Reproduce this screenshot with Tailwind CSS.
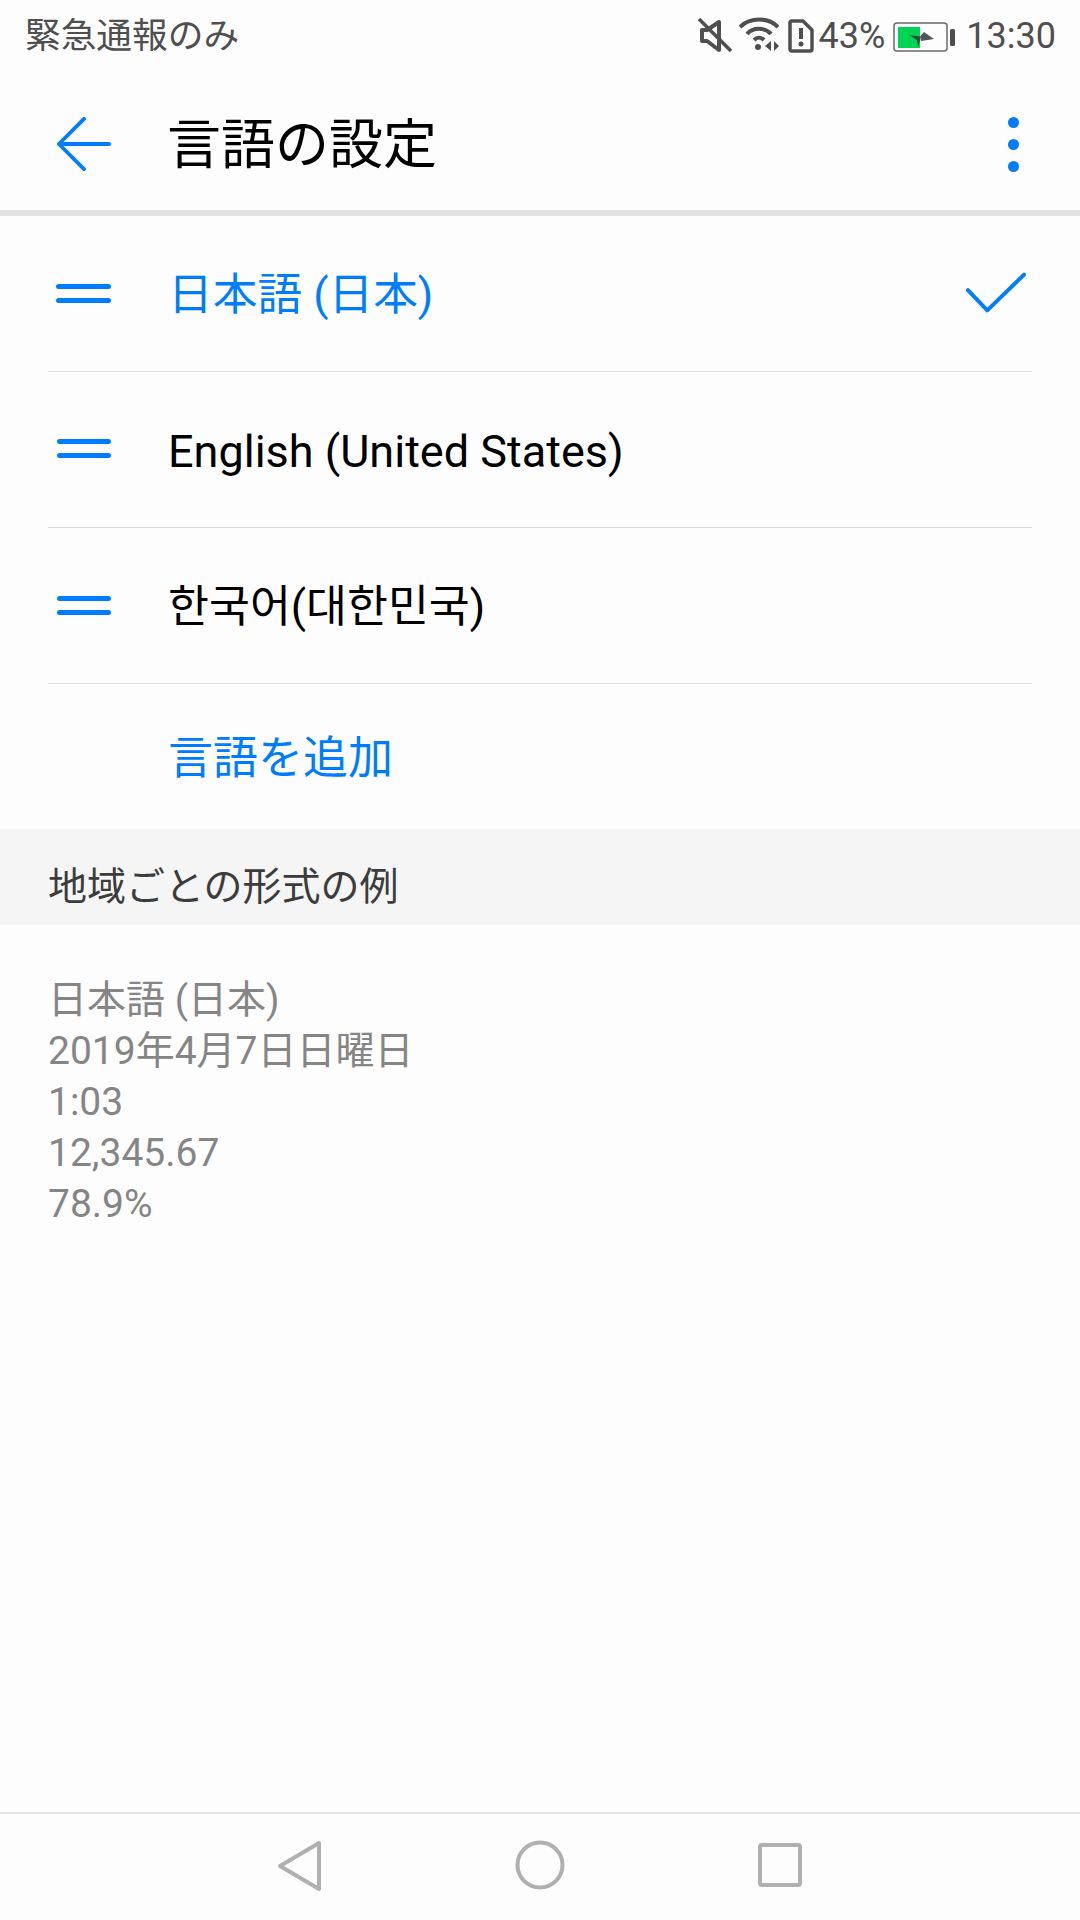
<!DOCTYPE html>
<html lang="ja">
<head>
<meta charset="utf-8">
<script src="https://cdn.jsdelivr.net/npm/@tailwindcss/browser@4"></script>
</head>
<body class="m-0">
<div class="w-[1080px] h-[1920px] bg-[#fdfdfd] flex flex-col overflow-hidden font-['Roboto','Noto_Sans_CJK_JP',sans-serif]">
  <!-- status bar -->
  <div class="h-[72px] flex items-center pl-[25px] pr-[24px] text-[#4f4f4f] shrink-0">
    <span class="text-[35.7px] leading-[72px]">緊急通報のみ</span>
    <div class="ml-auto flex items-center">
      <svg class="w-[36px] h-[40px]" viewBox="0 0 36 40" fill="none" stroke="#4f4f4f" stroke-width="4"><path d="M4 14h5l12-8v28l-12-9H4z" stroke-linejoin="round"/><path d="M1 1 33 33" transform="translate(0 2)" stroke-width="3.5"/></svg>
      <svg class="w-[40px] h-[40px] ml-[5px]" viewBox="0 0 40 40" fill="none" stroke="#4f4f4f" stroke-width="4"><path d="M1 11C11 1 29 1 39 11"/><path d="M8 18C14 11 26 11 32 18"/><path d="M15 24C18 21 22 21 25 24"/><circle cx="19" cy="31" r="3" fill="#4f4f4f" stroke="none"/><path d="M32 25v10l-6-5zM35 25v10l5-5z" fill="#4f4f4f" stroke="none"/></svg>
      <svg class="w-[26px] h-[34px] ml-[9px]" viewBox="0 0 26 34" fill="none"><path d="M4 2h11l9 9v19a2 2 0 0 1-2 2H4a2 2 0 0 1-2-2V4a2 2 0 0 1 2-2z" stroke="#4f4f4f" stroke-width="3.5" stroke-linejoin="round"/><path d="M13 9v11" stroke="#4f4f4f" stroke-width="4"/><circle cx="13" cy="25" r="2.5" fill="#4f4f4f"/></svg>
      <span class="text-[36px] leading-none ml-[5px]">43%</span>
      <svg class="w-[63px] h-[30px] ml-[8px] relative top-[1px]" viewBox="0 0 63 30" fill="none"><rect x="1" y="1" width="53" height="28" rx="3" fill="#fdfdfd" stroke="#6a6a6a" stroke-width="1.5"/><rect x="5" y="5" width="22" height="21" fill="#00d455"/><path d="M27 14.500 31 10 41 17 28 19z" fill="#555"/><path d="M16 13 27 14.500V19L25 25 24 18z" fill="#24543a"/><rect x="57" y="7" width="5" height="17" rx="1.500" fill="#4f4f4f"/></svg>
      <span class="text-[36px] leading-none ml-[10px]">13:30</span>
    </div>
  </div>
  <!-- header -->
  <div class="h-[138px] pt-[6px] flex items-center shrink-0">
    <svg class="w-[54px] h-[54px] ml-[57px]" viewBox="0 0 56 56" fill="none" stroke="#007dff" stroke-width="4" stroke-linecap="round" stroke-linejoin="round"><path d="M28 2 2 28l26 26M2 28h52"/></svg>
    <span class="ml-[56px] text-[54px] leading-none text-black relative top-[2px]">言語の設定</span>
    <div class="ml-auto mr-[61px] flex flex-col gap-[11px]">
      <span class="block w-[11px] h-[11px] rounded-full bg-[#007dff]"></span>
      <span class="block w-[11px] h-[11px] rounded-full bg-[#007dff]"></span>
      <span class="block w-[11px] h-[11px] rounded-full bg-[#007dff]"></span>
    </div>
  </div>
  <div class="h-[6px] bg-[#e1e1e1] shrink-0"></div>
  <!-- languages -->
  <div class="px-[48px] shrink-0">
    <div class="h-[155px] flex items-center">
      <div class="w-[55px] ml-[8px] flex flex-col gap-[9px]"><span class="block h-[5px] bg-[#007dff] rounded-full"></span><span class="block h-[5px] bg-[#007dff] rounded-full"></span></div>
      <span class="ml-[57px] text-[44.700px] leading-none text-[#007dff] relative top-[2px]">日本語 (日本)</span>
      <svg class="ml-auto mr-[6px] w-[60px] h-[44px]" viewBox="0 0 62 44" fill="none" stroke="#007dff" stroke-width="4" stroke-linecap="round" stroke-linejoin="round"><path d="M2 18 22 39 60 2"/></svg>
    </div>
    <div class="h-[1px] bg-[#dcdcdc]"></div>
    <div class="h-[155px] flex items-center">
      <div class="w-[54px] ml-[9px] flex flex-col gap-[9px] relative top-[-1px]"><span class="block h-[5px] bg-[#007dff] rounded-full"></span><span class="block h-[5px] bg-[#007dff] rounded-full"></span></div>
      <span class="ml-[57px] text-[45px] leading-none text-black relative top-[2px]">English (United States)</span>
    </div>
    <div class="h-[1px] bg-[#dcdcdc]"></div>
    <div class="h-[155px] flex items-center">
      <div class="w-[54px] ml-[9px] flex flex-col gap-[9px]"><span class="block h-[5px] bg-[#007dff] rounded-full"></span><span class="block h-[5px] bg-[#007dff] rounded-full"></span></div>
      <span class="ml-[57px] text-[44.500px] leading-none text-black relative top-[2px] font-['Roboto','Noto_Sans_CJK_KR',sans-serif]">한국어(대한민국)</span>
    </div>
    <div class="h-[1px] bg-[#dcdcdc]"></div>
    <div class="h-[145px] flex items-center pl-[120px]">
      <span class="text-[45px] leading-none text-[#007dff] relative top-[2px]">言語を追加</span>
    </div>
  </div>
  <!-- section -->
  <div class="h-[96px] bg-[#f5f5f5] flex items-center pl-[48px] shrink-0">
    <span class="text-[39px] leading-none text-[#3c3c3c] relative top-[10px]">地域ごとの形式の例</span>
  </div>
  <div class="pl-[48px] pt-[50px] text-[39px] leading-[51px] text-[#858585] shrink-0">
    <p>日本語 (日本)</p>
    <p>2019年4月7日日曜日</p>
    <p>1:03</p>
    <p>12,345.67</p>
    <p>78.9%</p>
  </div>
  <!-- nav -->
  <div class="mt-auto h-[108px] border-t-2 border-[#e4e4e4] shrink-0 relative">
    <svg class="absolute left-[277px] top-[26px] w-[46px] h-[52px]" viewBox="0 0 46 52" fill="none" stroke="#b0b0b0" stroke-width="4" stroke-linejoin="round"><path d="M42 3 3 26l39 23z"/></svg>
    <svg class="absolute left-[515px] top-[26px] w-[50px] h-[50px]" viewBox="0 0 50 50" fill="none" stroke="#b0b0b0" stroke-width="4"><circle cx="25" cy="25" r="22.5"/></svg>
    <svg class="absolute left-[757px] top-[28px] w-[46px] h-[46px]" viewBox="0 0 46 46" fill="none" stroke="#b0b0b0" stroke-width="4"><rect x="3" y="3" width="40" height="40" rx="2"/></svg>
  </div>
</div>
</body>
</html>
